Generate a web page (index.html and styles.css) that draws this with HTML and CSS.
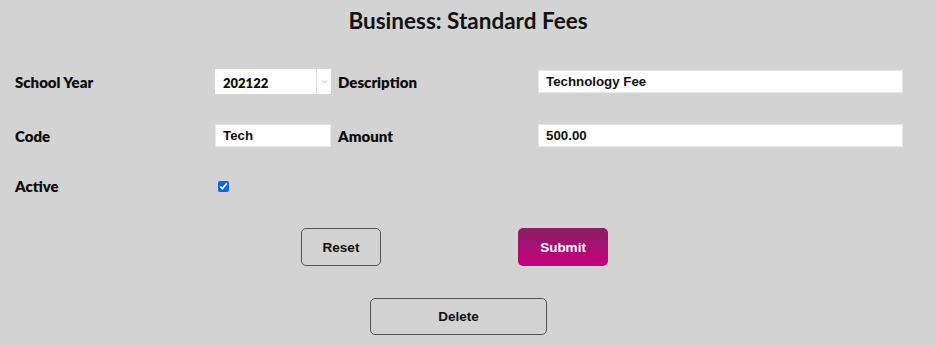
FILE: index.html
```html
<!DOCTYPE html>
<html>
<head>
<meta charset="utf-8">
<link rel="stylesheet" href="styles.css">
</head>
<body>
<h1 class="title">Business: Standard Fees</h1>
<div class="form">
  <label class="lbl">School Year</label>
  <div class="cell">
    <div class="select"><span class="sel-val">202122</span><span class="sel-arrow"><svg width="7" height="5" viewBox="0 0 7 5"><path d="M1 1.5 L3.5 4 L6 1.5" fill="none" stroke="#b5b5b5" stroke-width="1"/></svg></span></div>
  </div>
  <label class="lbl">Description</label>
  <div class="cell"><input class="inp wide" type="text" value="Technology Fee"></div>

  <label class="lbl">Code</label>
  <div class="cell"><input class="inp small" type="text" value="Tech"></div>
  <label class="lbl">Amount</label>
  <div class="cell"><input class="inp wide" type="text" value="500.00"></div>

  <label class="lbl">Active</label>
  <div class="cell"><input class="chk" type="checkbox" checked></div>
</div>
<div class="actions">
  <button class="btn reset">Reset</button>
  <button class="btn submit">Submit</button>
</div>
<div class="actions2">
  <button class="btn delete">Delete</button>
</div>
</body>
</html>
```
FILE: styles.css
```css
html, body {
  margin: 0;
  padding: 0;
  background: #d3d3d3;
  width: 936px;
  height: 346px;
  overflow: hidden;
}
body {
  font-family: "Lato", "Liberation Sans", sans-serif;
  color: #111;
}
.title {
  margin: 0;
  padding-top: 8px;
  height: 30px;
  line-height: 26px;
  text-align: center;
  font-size: 22.5px;
  font-weight: 700;
}
.form {
  margin-top: 31px;
  padding-left: 15px;
  display: grid;
  grid-template-columns: 200px 123px 200px 365px;
  grid-template-rows: 25px 25px 17px;
  row-gap: 29px;
}
.lbl {
  font-size: 15px;
  font-weight: 800;
  display: flex;
  align-items: center;
  padding-top: 1px;
  color: #0d0d0d;
}
.cell {
  display: flex;
  align-items: center;
}
.select {
  width: 116px;
  height: 25px;
  background: #fff;
  display: flex;
  align-items: center;
  box-sizing: border-box;
}
.sel-val {
  flex: 1;
  padding-left: 8px;
  padding-top: 2px;
  font-family: "Lato", "Liberation Sans", sans-serif;
  font-weight: 800;
  font-size: 13px;
}
.sel-arrow {
  width: 15px;
  height: 25px;
  border-left: 1px solid #dcdcdc;
  display: flex;
  align-items: center;
  justify-content: center;
  box-sizing: border-box;
}
.inp {
  box-sizing: border-box;
  height: 23px;
  border: 1px solid #e6e6e6;
  background: #fff;
  font-family: "Liberation Sans", Arial, sans-serif;
  font-weight: 700;
  font-size: 13.3px;
  color: #111;
  padding: 0 7px;
  outline: none;
  margin: 0;
}
.inp.small { width: 116px; }
.inp.wide { width: 365px; }
.chk {
  margin: 1px 0 0 3px;
  width: 11px;
  height: 11px;
  accent-color: #0b63e5;
}
.actions {
  display: flex;
  margin-top: 34px;
  padding-left: 301px;
}
.btn {
  font-family: "Liberation Sans", Arial, sans-serif;
  font-weight: 700;
  font-size: 13.5px;
  border-radius: 5px;
  box-sizing: border-box;
  cursor: pointer;
  margin: 0;
}
.reset {
  width: 80px;
  height: 38px;
  background: #d3d3d3;
  border: 1px solid #555;
  color: #111;
}
.submit {
  margin-left: 137px;
  width: 90px;
  height: 38px;
  border: none;
  color: #fff;
  background: linear-gradient(#8a1e65, #c6007f);
}
.actions2 {
  margin-top: 32px;
  padding-left: 370px;
}
.delete {
  width: 177px;
  height: 37px;
  background: #d3d3d3;
  border: 1px solid #555;
  color: #111;
}
```
